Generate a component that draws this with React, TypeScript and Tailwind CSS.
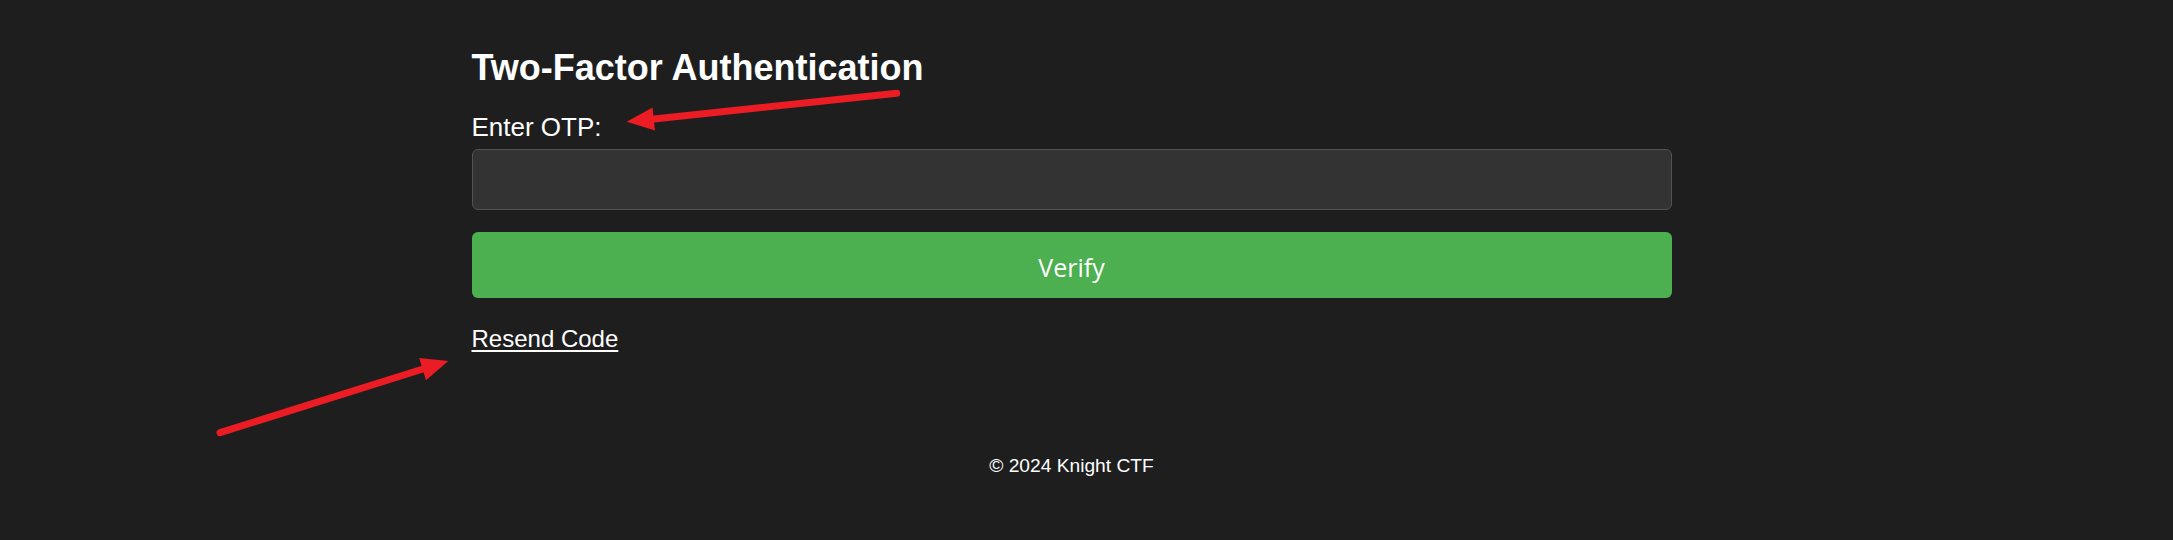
import React from "react";

function Arrows() {
  return (
    <svg
      className="pointer-events-none absolute inset-0"
      width="2173"
      height="540"
      viewBox="0 0 2173 540"
      fill="none"
    >
      {/* arrow pointing at the OTP label */}
      <line x1="896.7" y1="93.3" x2="654" y2="119" stroke="#ec1c24" strokeWidth="7" strokeLinecap="round" />
      <polygon points="626.7,121.7 652.5,107.5 655,130.5" fill="#ec1c24" />
      {/* arrow pointing at resend link */}
      <line x1="220" y1="432.7" x2="423" y2="369" stroke="#ec1c24" strokeWidth="7" strokeLinecap="round" />
      <polygon points="448.3,361 419.2,358 426,380.2" fill="#ec1c24" />
    </svg>
  );
}

export default function App() {
  return (
    <div className="relative min-h-[540px] w-full overflow-hidden bg-[#1e1e1e] font-['Liberation_Sans',Arial,sans-serif] text-white">
      <div className="pr-[30px]">
        <div className="mx-auto w-[1200px] pt-[47px]">
          <h2 className="text-[36px] font-bold leading-[41px]">Two-Factor Authentication</h2>
          <label htmlFor="otp" className="mt-[24px] block text-[26px] leading-[30px]">
            Enter OTP:
          </label>
          <input
            id="otp"
            type="text"
            className="mt-[7px] block h-[61px] w-full rounded-[6px] border border-[#525252] bg-[#333333] px-4 text-[24px] text-white outline-none"
          />
          <button
            type="button"
            className="mt-[22px] block h-[66px] w-full rounded-[6px] bg-[#4caf50] pt-[5px] font-['Open_Sans',sans-serif] text-[25px] text-white"
          >
            Verify
          </button>
          <div className="mt-[27px] text-[24px] leading-[28px]">
            <a href="#" className="text-white underline decoration-[2px] underline-offset-[3px]">
              Resend Code
            </a>
          </div>
        </div>
        <footer className="mt-[102px] text-center text-[19.2px] leading-[22px]">© 2024 Knight CTF</footer>
      </div>
      <Arrows />
    </div>
  );
}
